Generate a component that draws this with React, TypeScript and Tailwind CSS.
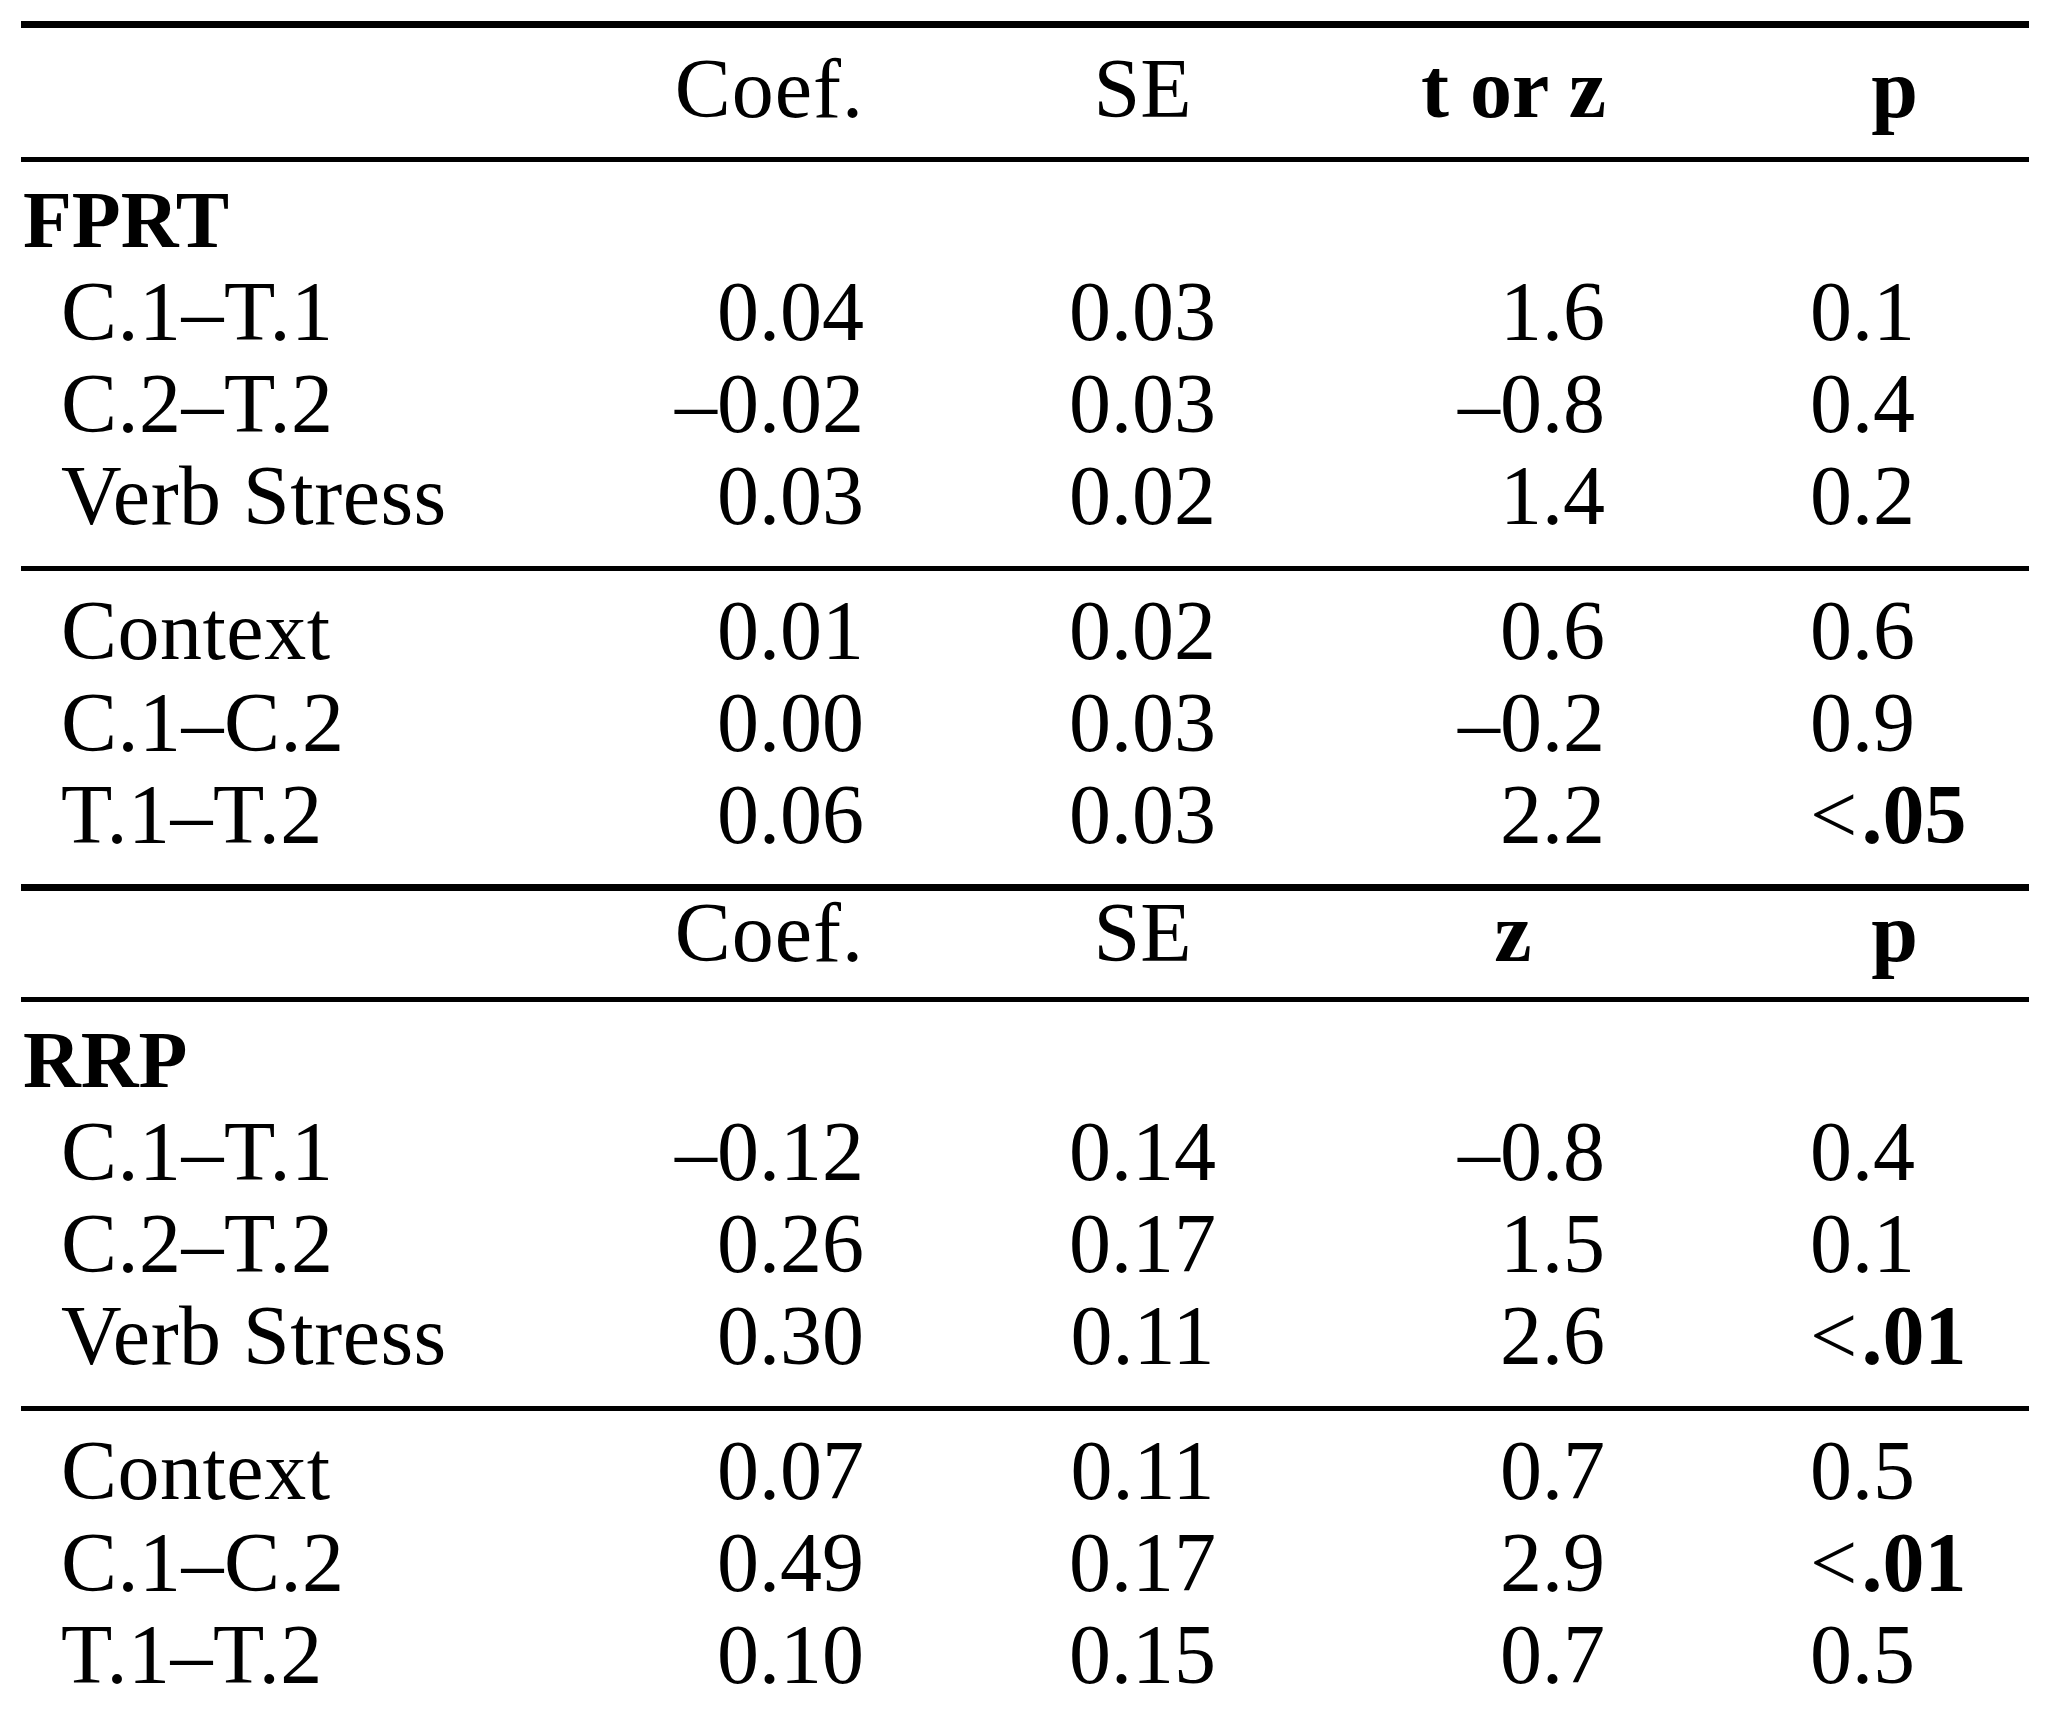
import React from "react";

type Row = { label: string; coef: string; se: string; t: string; p: string; pBold?: boolean };

const fprtA: Row[] = [
  { label: "C.1–T.1", coef: "0.04", se: "0.03", t: "1.6", p: "0.1" },
  { label: "C.2–T.2", coef: "–0.02", se: "0.03", t: "–0.8", p: "0.4" },
  { label: "Verb Stress", coef: "0.03", se: "0.02", t: "1.4", p: "0.2" },
];
const fprtB: Row[] = [
  { label: "Context", coef: "0.01", se: "0.02", t: "0.6", p: "0.6" },
  { label: "C.1–C.2", coef: "0.00", se: "0.03", t: "–0.2", p: "0.9" },
  { label: "T.1–T.2", coef: "0.06", se: "0.03", t: "2.2", p: ".05", pBold: true },
];
const rrpA: Row[] = [
  { label: "C.1–T.1", coef: "–0.12", se: "0.14", t: "–0.8", p: "0.4" },
  { label: "C.2–T.2", coef: "0.26", se: "0.17", t: "1.5", p: "0.1" },
  { label: "Verb Stress", coef: "0.30", se: "0.11", t: "2.6", p: ".01", pBold: true },
];
const rrpB: Row[] = [
  { label: "Context", coef: "0.07", se: "0.11", t: "0.7", p: "0.5" },
  { label: "C.1–C.2", coef: "0.49", se: "0.17", t: "2.9", p: ".01", pBold: true },
  { label: "T.1–T.2", coef: "0.10", se: "0.15", t: "0.7", p: "0.5" },
];

const grid = "grid grid-cols-[650px_193px_557px_184px_424px] whitespace-nowrap";

function DataRow({ r }: { r: Row }) {
  return (
    <div className={`${grid} h-[92px] leading-[92px]`}>
      <div className="pl-[40px] tracking-[0.5px]">{r.label}</div>
      <div className="text-right">{r.coef}</div>
      <div className="text-center">{r.se}</div>
      <div className="text-right">{r.t}</div>
      <div className="pl-[205px]">
        {r.pBold ? (
          <>
            <span className="mr-[4px]">&lt;</span>
            <span className="font-bold">{r.p}</span>
          </>
        ) : (
          r.p
        )}
      </div>
    </div>
  );
}

function Header({ stat, className }: { stat: string; className: string }) {
  return (
    <div className={`${grid} ${className}`}>
      <div />
      <div className="text-right tracking-[1px]">Coef.</div>
      <div className="text-center">SE</div>
      <div className={stat === "z" ? "text-center font-bold" : "text-right font-bold"}>{stat}</div>
      <div className="pl-[206px]">
        <span className="inline-block w-[167px] text-center font-bold">p</span>
      </div>
    </div>
  );
}

function GroupLabel({ text }: { text: string }) {
  return (
    <div className={`${grid} h-[92px] leading-[92px]`}>
      <div className="pl-[2px] font-bold text-[80px]">{text}</div>
    </div>
  );
}

export default function App() {
  return (
    <div
      className="w-[2050px] h-[1713px] bg-white text-black overflow-hidden text-[84px]"
      style={{ fontFamily: '"Liberation Serif", "Times New Roman", serif' }}
    >
      <div className="ml-[21px] w-[2008px] pt-[21px]">
        <div className="h-[7px] bg-black" />
        <Header stat="t or z" className="h-[129px] pt-[15px] leading-[92px]" />
        <div className="h-[5px] bg-black" />
        <div className="pt-[12px] pb-[24px]">
          <GroupLabel text="FPRT" />
          {fprtA.map((r) => (
            <DataRow key={r.label} r={r} />
          ))}
        </div>
        <div className="h-[5px] bg-black" />
        <div className="pt-[14px] pb-[23px]">
          {fprtB.map((r) => (
            <DataRow key={r.label} r={r} />
          ))}
        </div>
        <div className="h-[7px] bg-black" />
        <Header stat="z" className="h-[106px] leading-[84px]" />
        <div className="h-[5px] bg-black" />
        <div className="pt-[12px] pb-[24px]">
          <GroupLabel text="RRP" />
          {rrpA.map((r) => (
            <DataRow key={r.label} r={r} />
          ))}
        </div>
        <div className="h-[5px] bg-black" />
        <div className="pt-[14px]">
          {rrpB.map((r) => (
            <DataRow key={r.label} r={r} />
          ))}
        </div>
      </div>
    </div>
  );
}
